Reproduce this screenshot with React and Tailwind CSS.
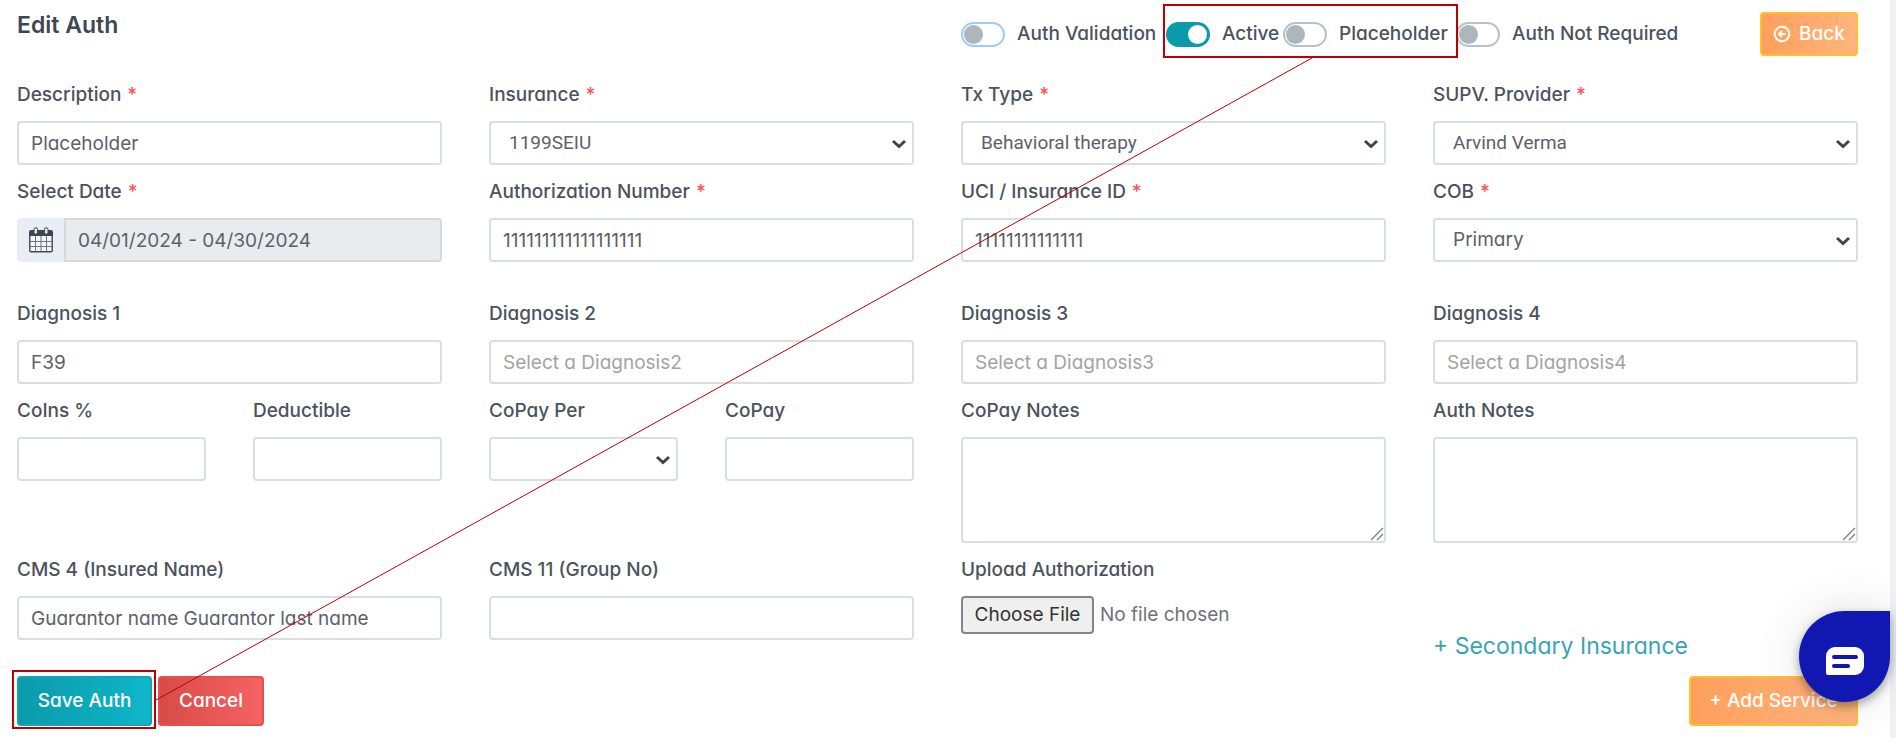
import { useState } from "react";

const controlClass =
  "block h-11 w-full rounded border-2 bg-white px-3 text-[19px] text-[#5b6169] outline-none placeholder:text-[#a3a3a3]";

function Field(props) {
  return (
    <div className="min-w-0">
      <label
        htmlFor={props.id}
        className="mb-[13px] block text-[19px] leading-[26px] font-medium whitespace-nowrap text-[#4b535d]"
      >
        {props.label}
        {props.required && <span className="ml-[6px] text-[#f65560]">*</span>}
      </label>
      {props.children}
    </div>
  );
}

function TextField(props) {
  return (
    <Field id={props.id} label={props.label} required={props.required}>
      <input
        id={props.id}
        type="text"
        defaultValue={props.value}
        placeholder={props.placeholder}
        className={`${controlClass} ${
          props.diagnosis ? "border-[#dddddd]" : "border-[#d9dee3]"
        }`}
      />
    </Field>
  );
}

function SelectField(props) {
  return (
    <Field id={props.id} label={props.label} required={props.required}>
      <div className="relative">
        <select
          id={props.id}
          className={`${controlClass} appearance-none border-[#d9dee3] pl-[18px] ${
            props.plain ? "font-['Roboto',sans-serif]" : ""
          }`}
        >
          <option>{props.value}</option>
        </select>
        <svg
          viewBox="0 0 16 10"
          className="pointer-events-none absolute top-[18px] right-[7px] h-[10px] w-4"
        >
          <path
            d="M2 2l6 5.5L14 2"
            fill="none"
            stroke="#3d464f"
            strokeWidth="3"
          />
        </svg>
      </div>
    </Field>
  );
}

function NotesField(props) {
  return (
    <Field id={props.id} label={props.label}>
      <div className="relative">
        <textarea
          id={props.id}
          className="block h-[106px] w-full resize-none rounded border-2 border-[#d9dee3] px-3 py-2 text-[19px] text-[#5b6169] outline-none"
        />
        <svg
          viewBox="0 0 14 14"
          className="pointer-events-none absolute right-[2px] bottom-[2px] h-[14px] w-[14px]"
        >
          <path d="M1 13L13 1M7 13l6-6" stroke="#7d7d7d" strokeWidth="1.3" />
        </svg>
      </div>
    </Field>
  );
}

function Toggle(props) {
  const [on, setOn] = useState(Boolean(props.checked));
  return (
    <label
      className={`flex shrink-0 items-center gap-3 text-[19px] font-medium whitespace-nowrap text-[#4b535d] ${props.width}`}
    >
      <span className="relative block h-[25px] w-11 shrink-0">
        <input
          type="checkbox"
          checked={on}
          onChange={() => setOn(!on)}
          className={`block h-full w-full appearance-none rounded-full border-2 bg-white checked:border-[#0a9bab] checked:bg-[#0a9bab] ${
            props.focused ? "border-[#9dcbfa]" : "border-[#b9c0c8]"
          }`}
        />
        <span
          className={`pointer-events-none absolute top-[3px] h-[19px] w-[19px] rounded-full ${
            on ? "right-[3px] bg-white" : "left-[3px] bg-[#adb5bd]"
          }`}
        />
      </span>
      {props.label}
    </label>
  );
}

function CalendarIcon() {
  return (
    <svg viewBox="0 0 24 26" className="h-[26px] w-6">
      <rect x="1" y="4.5" width="22" height="20.5" rx="1" fill="#f4f6fa" />
      <path d="M0 5a2 2 0 0 1 2-2h20a2 2 0 0 1 2 2v4H0z" fill="#3d464f" />
      <path
        d="M.8 8v15.5q0 1.2 1.2 1.2h20q1.2 0 1.2-1.2V8"
        fill="none"
        stroke="#3d464f"
        strokeWidth="1.4"
      />
      <path
        d="M6.5 9v15.5M12 9v15.5M17.5 9v15.5M1 14.5h22M1 19.5h22"
        fill="none"
        stroke="#6d757e"
        strokeWidth="1"
      />
      <rect x="5" y=".7" width="3.6" height="6.5" rx="1.8" fill="#dfe4ec" stroke="#3d464f" strokeWidth="1" />
      <rect x="15.4" y=".7" width="3.6" height="6.5" rx="1.8" fill="#dfe4ec" stroke="#3d464f" strokeWidth="1" />
    </svg>
  );
}

function BackIcon() {
  return (
    <svg
      viewBox="0 0 18 18"
      className="h-[18px] w-[18px]"
      fill="none"
      stroke="currentColor"
      strokeWidth="2"
    >
      <circle cx="9" cy="9" r="7.3" />
      <path d="M12.5 9H7M9 6L6 9l3 3" />
    </svg>
  );
}

function ChatButton() {
  return (
    <button
      type="button"
      aria-label="Open chat"
      className="absolute right-[6px] bottom-9 flex h-[91px] w-[91px] items-center justify-center rounded-full rounded-tr-[10px] bg-[#1118b1] pt-2 shadow-[0_4px_10px_rgba(0,0,0,0.35),0_0_50px_rgba(0,0,0,0.12)]"
    >
      <svg viewBox="0 0 38 28" className="h-7 w-[38px]">
        <path
          d="M9 0h20a9 9 0 0 1 9 9v10a9 9 0 0 1-9 9H2a2 2 0 0 1-2-2V9a9 9 0 0 1 9-9z"
          fill="#fff"
        />
        <path
          d="M8 10h22M8 19h14"
          stroke="#1118b1"
          strokeWidth="4"
          strokeLinecap="round"
        />
      </svg>
    </button>
  );
}

// red boxes round the controls to look at, joined by a line
function Callouts() {
  return (
    <svg
      className="pointer-events-none absolute inset-0 h-full w-full"
      fill="none"
      stroke="#c00000"
    >
      <rect x="1164" y="5" width="293" height="52" strokeWidth="2" />
      <rect x="13" y="671" width="142" height="57" strokeWidth="2" />
      <path d="M1312 58L156 700" />
    </svg>
  );
}

function App() {
  return (
    <div className="relative flex font-['Inter',sans-serif] [font-feature-settings:'cv11']">
      <form className="flex-1 bg-white pt-3 pr-8 pb-3 pl-[17px]">
        <div className="mb-[26px] grid grid-cols-2 gap-x-[47px]">
          <h1 className="text-[23px] leading-[26px] font-semibold text-[#3f4851]">
            Edit Auth
          </h1>
          <div className="flex items-center">
            <Toggle label="Auth Validation" width="w-[205px]" focused />
            <Toggle label="Active" width="w-[117px]" checked />
            <Toggle label="Placeholder" width="w-[173px]" />
            <Toggle label="Auth Not Required" width="w-[250px]" />
            <button
              type="button"
              className="ml-auto flex h-11 w-[98px] items-center justify-center gap-2 rounded border-2 border-[#ffc02b] bg-linear-to-r from-[#ff9f5c] to-[#ffb57c] text-[19px] font-medium text-white"
            >
              <BackIcon />
              Back
            </button>
          </div>
        </div>

        <div className="grid grid-cols-4 gap-x-[47px] gap-y-[14px]">
          <TextField id="description" label="Description" value="Placeholder" required />
          <SelectField id="insurance" label="Insurance" value="1199SEIU" required plain />
          <SelectField id="txType" label="Tx Type" value="Behavioral therapy" required plain />
          <SelectField id="provider" label="SUPV. Provider" value="Arvind Verma" required plain />

          <Field id="date" label="Select Date" required>
            <div className="flex">
              <span className="flex w-[47px] shrink-0 items-center justify-center rounded-l bg-[#e9eef6]">
                <CalendarIcon />
              </span>
              <input
                id="date"
                type="text"
                readOnly
                defaultValue="04/01/2024 - 04/30/2024"
                className="block h-11 w-full rounded-r border-2 border-[#d4d9de] bg-[#e9ecef] px-3 text-[19px] text-[#5b6169] outline-none"
              />
            </div>
          </Field>
          <TextField id="authNumber" label="Authorization Number" value="111111111111111111" required />
          <TextField id="uci" label="UCI / Insurance ID" value="11111111111111" required />
          <SelectField id="cob" label="COB" value="Primary" required />
        </div>

        <div className="mt-[39px] grid grid-cols-4 gap-x-[47px] gap-y-[14px]">
          <TextField id="diagnosis1" label="Diagnosis 1" value="F39" diagnosis />
          <TextField id="diagnosis2" label="Diagnosis 2" placeholder="Select a Diagnosis2" diagnosis />
          <TextField id="diagnosis3" label="Diagnosis 3" placeholder="Select a Diagnosis3" diagnosis />
          <TextField id="diagnosis4" label="Diagnosis 4" placeholder="Select a Diagnosis4" diagnosis />

          <div className="grid grid-cols-2 gap-x-[47px]">
            <TextField id="coins" label="CoIns %" />
            <TextField id="deductible" label="Deductible" />
          </div>
          <div className="grid grid-cols-2 gap-x-[47px]">
            <SelectField id="copayPer" label="CoPay Per" />
            <TextField id="copay" label="CoPay" />
          </div>
          <NotesField id="copayNotes" label="CoPay Notes" />
          <NotesField id="authNotes" label="Auth Notes" />

          <TextField id="cms4" label="CMS 4 (Insured Name)" value="Guarantor name Guarantor last name" />
          <TextField id="cms11" label="CMS 11 (Group No)" />
          <Field id="upload" label="Upload Authorization">
            <input
              id="upload"
              type="file"
              className="block w-full text-[19px] text-[#6c727a] file:mr-[6px] file:h-[38px] file:w-[133px] file:rounded file:border-2 file:border-solid file:border-[#858585] file:bg-[#efefef] file:text-[19px] file:text-[#333333]"
            />
          </Field>
          <div className="flex items-end">
            <a
              href="#secondary"
              className="pt-[75px] text-[23px] leading-[28px] whitespace-nowrap text-[#3aa3b3]"
            >
              + Secondary Insurance
            </a>
          </div>
        </div>

        <div className="mt-4 flex">
          <button
            type="submit"
            className="h-[50px] w-[135px] rounded border-2 border-[#12a5b5] bg-linear-to-r from-[#0a9bab] to-[#0fb6ca] text-[19px] font-medium text-white"
          >
            Save Auth
          </button>
          <button
            type="button"
            className="ml-[6px] h-[50px] w-[106px] rounded border-2 border-[#e6504f] bg-linear-to-r from-[#d84a48] to-[#f56363] text-[19px] font-medium text-white"
          >
            Cancel
          </button>
          <button
            type="button"
            className="ml-auto h-[50px] w-[169px] rounded border-2 border-[#ffc02b] bg-linear-to-r from-[#ff9f5c] to-[#ffb57c] text-[19px] font-medium text-white"
          >
            + Add Service
          </button>
        </div>
      </form>
      <div className="w-[6px] bg-[#edf4f6]" />
      <ChatButton />
      <Callouts />
    </div>
  );
}
export default App;
